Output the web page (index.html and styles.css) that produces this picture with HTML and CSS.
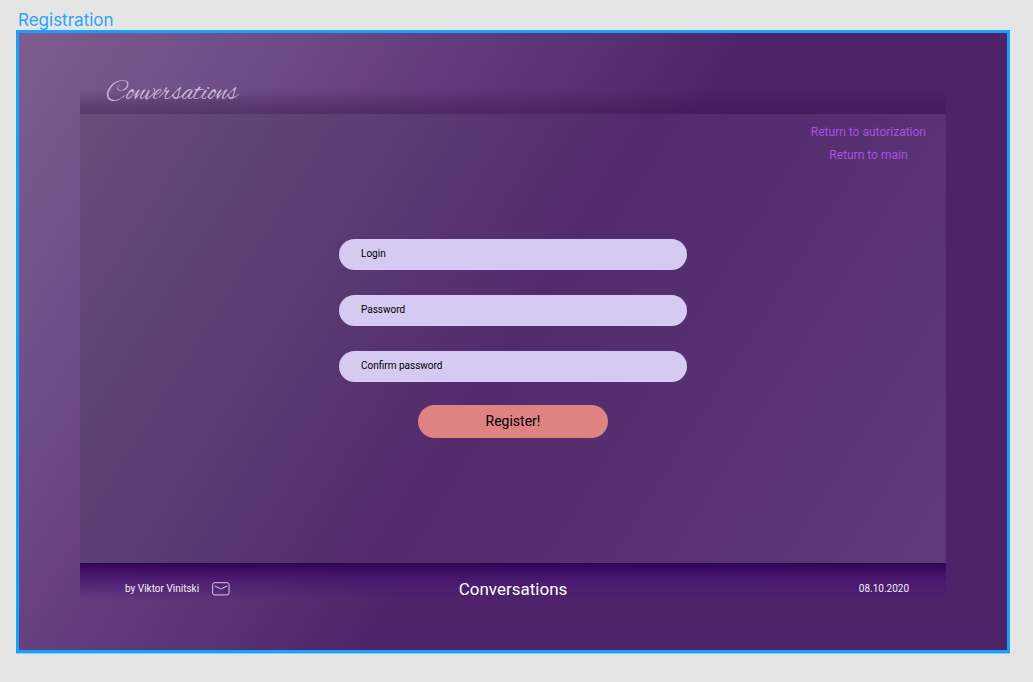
FILE: index.html
```html
<!DOCTYPE html>
<html lang="en">
<head>
<meta charset="utf-8">
<meta name="viewport" content="width=device-width, initial-scale=1">
<title>Registration</title>
<link rel="stylesheet" href="styles.css">
</head>
<body class="canvas">
  <h1 class="frame-label">Registration</h1>
  <div class="frame">
    <header class="header">
      <span class="logo">Conversations</span>
    </header>
    <main class="panel">
      <nav class="links">
        <a class="link" href="#authorization">Return to autorization</a>
        <a class="link" href="#main">Return to main</a>
      </nav>
      <form class="form">
        <div class="fields">
          <input class="field" type="text" name="login" placeholder="Login" aria-label="Login">
          <input class="field" type="password" name="password" placeholder="Password" aria-label="Password">
          <input class="field" type="password" name="confirm" placeholder="Confirm password" aria-label="Confirm password">
        </div>
        <button class="submit" type="submit">Register!</button>
      </form>
    </main>
    <footer class="footer">
      <div class="author">
        <span>by Viktor Vinitski</span>
        <a class="mail" href="#mail" aria-label="Send mail">
          <svg class="mail-icon" width="18" height="14" viewBox="0 0 18 14" fill="none" stroke="currentColor">
            <rect x="0.7" y="0.7" width="16.4" height="12.2" rx="2"/>
            <path d="M3 4.1 8.2 6.7Q8.9 7 9.6 6.7L14.8 4.1" stroke-linecap="round"/>
          </svg>
        </a>
      </div>
      <strong class="brand">Conversations</strong>
      <time class="date" datetime="2020-10-08">08.10.2020</time>
    </footer>
  </div>
</body>
</html>
```

FILE: styles.css
```css
* {
  box-sizing: border-box;
}

.canvas {
  display: flex;
  flex-direction: column;
  min-height: 100vh;
  margin: 0;
  padding: 10px 23px 29px 16px;
  background: #e5e5e5;
  font-family: Roboto, "Liberation Sans", sans-serif;
}

.frame-label {
  margin: 0;
  padding-left: 2px;
  color: #2ba3f7;
  font-family: Inter, Roboto, sans-serif;
  font-size: 17px;
  font-weight: 400;
  line-height: 20px;
}

.frame {
  display: flex;
  flex: 1;
  flex-direction: column;
  padding: 0 61px;
  border: 3px solid #18a0fb;
  box-shadow: 0 1px 0 #8ccbf5;
  background: linear-gradient(122deg, #7c5d8c 0%, #70508a 15%, #67427f 27%, #5e3779 36%, #573071 44%, #4e236a 53%) padding-box;
}

.header {
  display: flex;
  align-items: flex-end;
  height: 81px;
  padding: 0 26px 6px;
  background: linear-gradient(to top, rgba(54, 20, 70, 0.42), rgba(54, 20, 70, 0.34) 8px, rgba(54, 20, 70, 0) 25px);
}

.logo {
  color: #cdb8d9;
  font-family: "Alex Brush", "Liberation Serif", serif;
  font-size: 28px;
  line-height: 28px;
}

.panel {
  display: flex;
  flex: 1;
  flex-direction: column;
  gap: 72px;
  padding: 7px 20px 24px;
  background: linear-gradient(122deg, #694c79 0%, #604376 16%, #5a3a73 30%, #522b6c 50%, #563070 70%, #5f3a7a 100%);
}

.links {
  display: flex;
  flex-direction: column;
  align-items: center;
  align-self: flex-end;
}

.link {
  color: #ac4fe2;
  font-size: 12px;
  line-height: 23px;
  text-decoration: none;
}

.form {
  display: flex;
  flex-direction: column;
  align-items: center;
  gap: 23px;
}

.fields {
  display: flex;
  flex-direction: column;
  gap: 25px;
  width: 348px;
  max-width: 100%;
}

.field {
  width: 100%;
  height: 31px;
  padding: 0 22px 2px;
  border: 0;
  border-radius: 16px;
  background: #d6caf2;
  color: #000;
  font: 10px Roboto, sans-serif;
}

.field::placeholder {
  color: #000;
  opacity: 1;
}

.submit {
  width: 190px;
  height: 33px;
  padding: 0 0 2px;
  border: 0;
  border-radius: 17px;
  background: #de8381;
  color: #000;
  font: 14px Roboto, sans-serif;
}

.footer {
  display: grid;
  grid-template-columns: 1fr auto 1fr;
  align-items: center;
  padding: 15px 0 50px;
  background: linear-gradient(rgb(50, 2, 84), rgba(62, 12, 104, 0.88) 9px, rgba(74, 24, 114, 0.7) 20px, rgba(74, 24, 114, 0) 37px);
  color: #f4effa;
  font-size: 10px;
  line-height: 22px;
}

.author {
  display: flex;
  align-items: center;
  gap: 13px;
  padding-left: 45px;
}

.mail {
  display: flex;
  color: #dccbe8;
}

.brand {
  color: #fff;
  font-size: 17px;
  font-weight: 400;
}

.date {
  padding-right: 37px;
  text-align: right;
}
```
